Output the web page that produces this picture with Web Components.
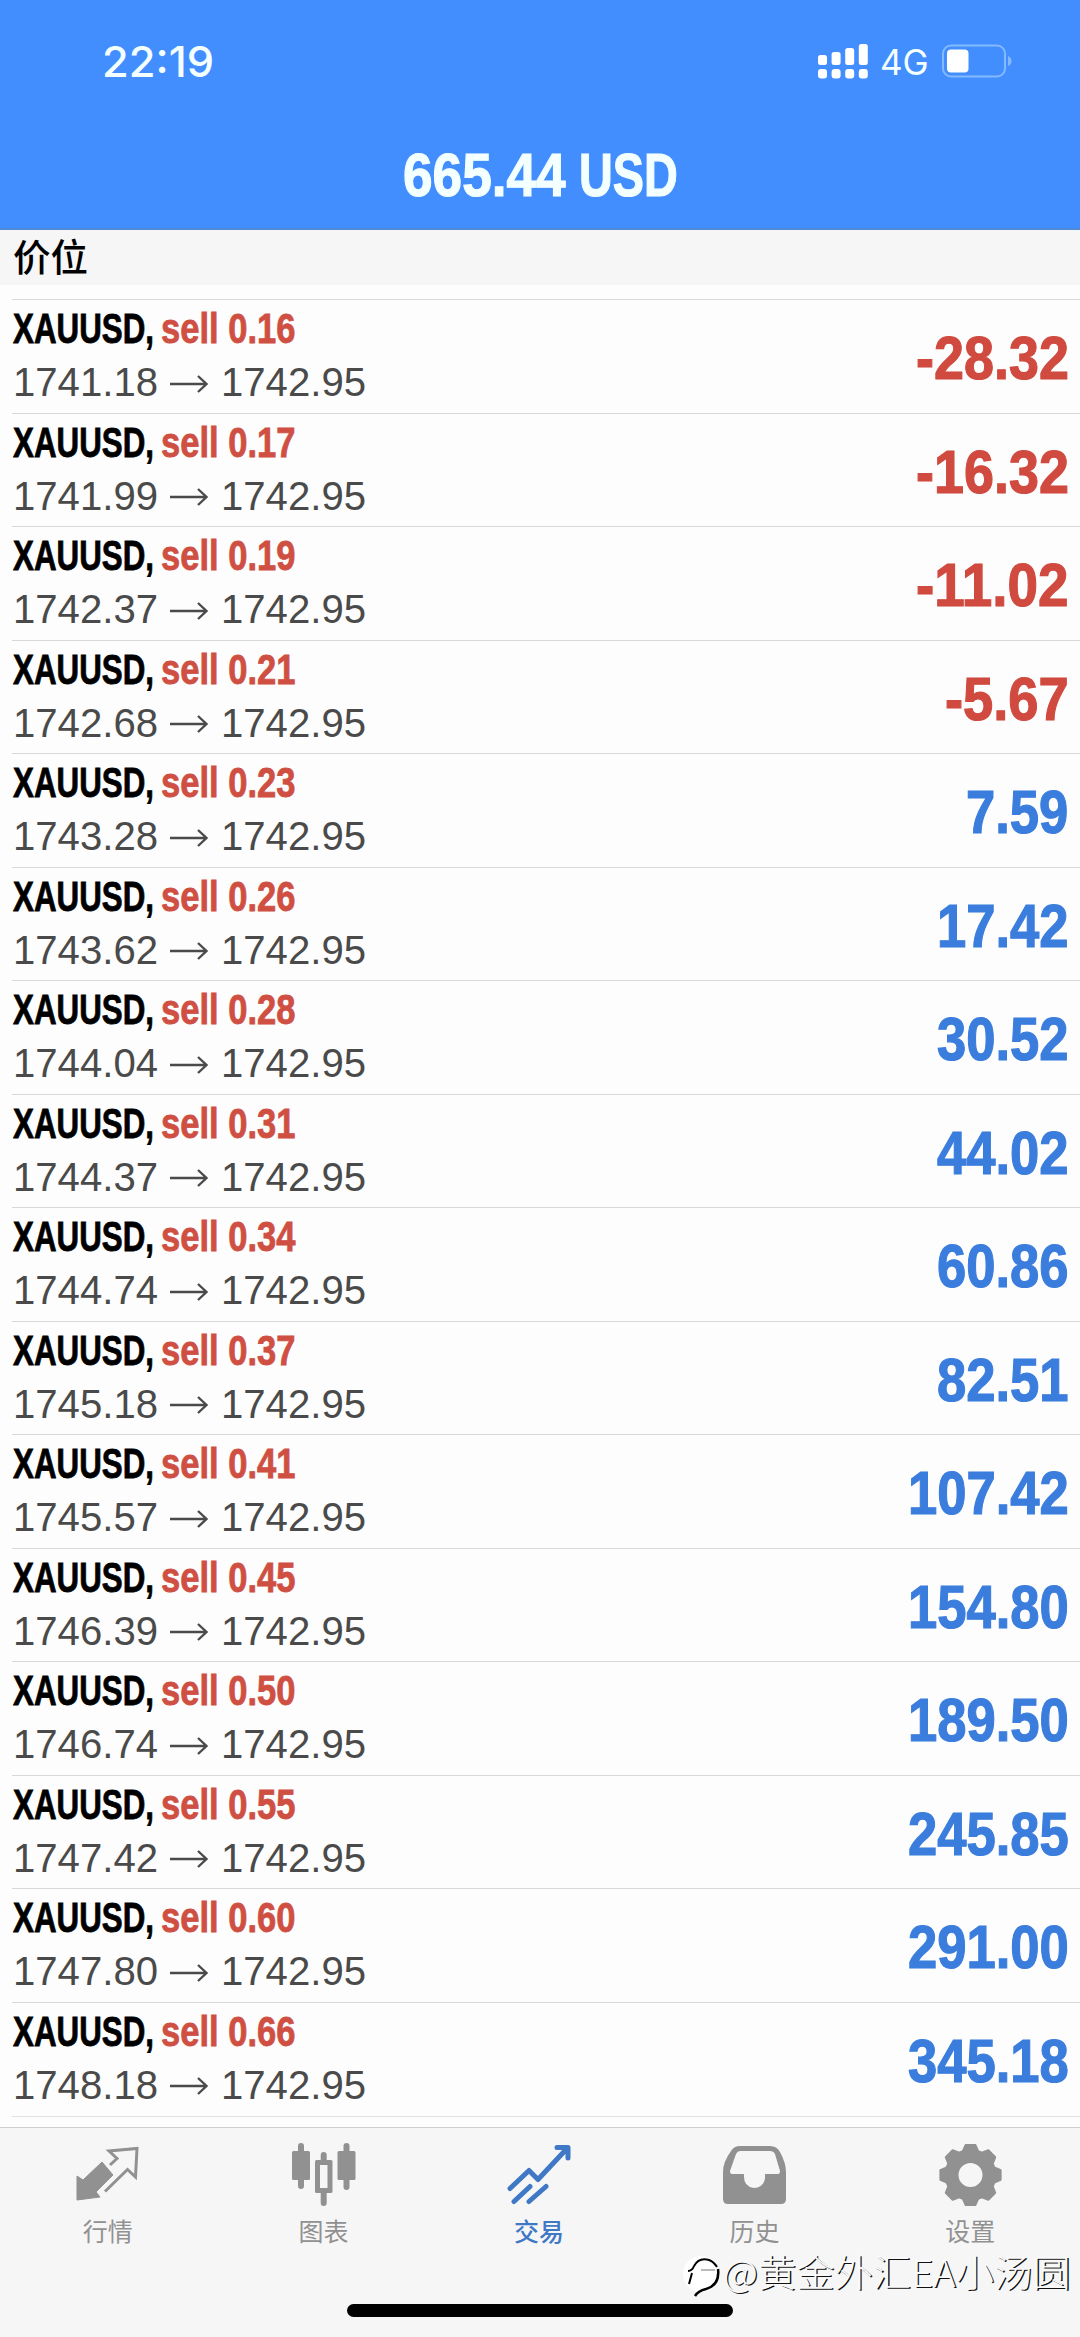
<!DOCTYPE html>
<html lang="zh">
<head>
<meta charset="utf-8">
<title>Trade</title>
<style>
html,body{margin:0;padding:0}
body{width:1080px;height:2337px;overflow:hidden;background:#fdfdfd;font-family:"Liberation Sans","Noto Sans CJK SC",sans-serif}
</style>
</head>
<body>
<trade-app></trade-app>
<script>
// Fits its slotted text to the width given in the "w" attribute by condensing it.
class FitText extends HTMLElement{
  constructor(){super();this.attachShadow({mode:'open'}).innerHTML=`<style>:host{display:flex}span{display:block;flex:none;transform-origin:0 50%;white-space:pre}</style><span><slot></slot></span>`}
  connectedCallback(){
    const w=+this.getAttribute('w'),s=this.shadowRoot.querySelector('span');
    this.style.width=w+'px';
    s.style.transform=`scaleX(${w/s.offsetWidth})`;
  }
}
class StatusBar extends HTMLElement{
  constructor(){super();this.attachShadow({mode:'open'}).innerHTML=`
<style>:host{display:flex;height:122px;align-items:center;color:#f4ffff;font-family:Inter,sans-serif;padding:0 68px 0 102px;box-sizing:border-box}
.t{font-size:43px;font-weight:500;line-height:50px;margin-right:auto}
.n{font-size:35px;line-height:44px;margin:2px 13px 0 12px}svg{display:block}</style>
<fit-text class="t" w="112">22:19</fit-text>
<svg width="50" height="36" viewBox="0 0 50 36" fill="#fff"><rect y="12" width="9" height="10" rx="2.5"/><rect x="13.6" y="9" width="9" height="13" rx="2.5"/><rect x="27.2" y="5" width="9" height="17" rx="2.5"/><rect x="40.8" y="1" width="9" height="21" rx="2.5"/><rect y="26" width="9" height="9.5" rx="3"/><rect x="13.6" y="26" width="9" height="9.5" rx="3"/><rect x="27.2" y="26" width="9" height="9.5" rx="3"/><rect x="40.8" y="26" width="9" height="9.5" rx="3"/></svg>
<fit-text class="n" w="49">4G</fit-text>
<svg width="70" height="34" viewBox="0 0 70 34"><rect x="1" y="1.5" width="62" height="31" rx="8" fill="none" stroke="#84b9ff" stroke-width="2"/><rect x="5" y="5.5" width="21.500" height="23" rx="4" fill="#fff"/><path d="M66 12q3.500 1.500 3.500 5t-3.500 5z" fill="#84b9ff"/></svg>`}
}
class AccountHeader extends HTMLElement{
  constructor(){super();this.attachShadow({mode:'open'}).innerHTML=`
<style>:host{display:block;height:230px;background:#438eff;box-shadow:inset 0 -2px #4f8ad8}
.b{display:flex;justify-content:center;gap:13px;color:#f4ffff;font-size:61px;font-weight:700;line-height:70px;padding-top:18px;-webkit-text-stroke:1.2px currentColor}</style>
<status-bar></status-bar><div class="b"><fit-text w="163"><slot></slot></fit-text><fit-text w="99"><slot name="currency"></slot></fit-text></div>`}
}
class SectionTitle extends HTMLElement{
  constructor(){super();this.attachShadow({mode:'open'}).innerHTML=`
<style>:host{display:block;height:55px;margin-bottom:14px;background:#f5f6f5;color:#000;font:500 37.500px/50px "Noto Sans CJK SC",sans-serif;padding-left:13px;box-sizing:border-box}</style><slot></slot>`}
}
class PositionRow extends HTMLElement{
  constructor(){super();this.attachShadow({mode:'open'})}
  connectedCallback(){
    const a=n=>this.getAttribute(n),p=a('profit'),neg=p[0]==='-';
    const w=(p.replace(/[.-]/g,'').length*29.3+14.7+(neg?21:0)).toFixed(1);
    this.shadowRoot.innerHTML=`
<style>:host{display:flex;height:113.54px;box-sizing:border-box;margin-left:12px;border-top:1.500px solid #d8d8d8;justify-content:space-between;align-items:flex-start}
.l{padding:5px 0 0 1px}.a,.p{display:flex;align-items:center}.a{font-size:42px;font-weight:700;line-height:48px;color:#000;-webkit-text-stroke:.8px currentColor}
.s{color:#cf4f43;margin-left:7px}.p{font-size:41.500px;line-height:48px;color:#4a4a4a;margin-top:5px}
svg{display:block;margin:3px 12px 0 11px}
.v{font-size:61px;font-weight:700;line-height:70px;margin:23px 11px 0 0;-webkit-text-stroke:1.2px currentColor;color:${neg?'#d04a3f':'#3a7ddd'}}</style>
<div class="l"><div class="a"><fit-text w="141">XAUUSD,</fit-text><fit-text class="s" w="134">sell ${a('lot')}</fit-text></div>
<div class="p"><fit-text w="145">${a('open')}</fit-text><svg width="40" height="18" viewBox="0 0 40 18" fill="none" stroke="#4a4a4a" stroke-width="2.400"><path d="M1 9H37M29 1L37.500 9L29 17"/></svg><fit-text w="145">1742.95</fit-text></div></div>
<fit-text class="v" w="${w}">${p}</fit-text>`}
}
const ICONS={
quotes:'<path d="M1 32V56L24 53L20 48L37 31L26 18L7 36Z" fill="currentColor" stroke="currentColor" stroke-linejoin="round"/><path d="M34 21L41 14.500L33 7L61 4.500L59.500 33L51.500 25.500L29 47.500" fill="none" stroke="currentColor" stroke-width="3"/>',
chart:'<g fill="currentColor"><rect x="6" y="-1" width="6" height="46" rx="3"/><rect y="7" width="18" height="29" rx="1.500"/><rect x="51.500" y="-1" width="6" height="47" rx="3"/><rect x="45.500" y="7" width="18" height="29" rx="1.500"/><rect x="28.700" y="8" width="6" height="54" rx="3"/><rect x="23" y="16" width="17.500" height="33" rx="1.500"/></g><rect x="28" y="21" width="7.500" height="23" fill="#f6f6f6"/>',
trade:'<g fill="none" stroke="currentColor" stroke-width="5" stroke-linecap="round" stroke-linejoin="round"><path d="M3 44.500L22 26.500L31 35.500L60 4.500M50 3.500H61V14M7 57.500L23 42.500M22 57.500L39 42.500"/></g>',
history:'<path fill="currentColor" fill-rule="evenodd" d="M17 2H47Q54 2 57 8Q63 19 63 28V55Q63 60 58 60H5Q0 60 0 55V28Q0 18 8 7Q11 2 17 2ZM17 7Q14.500 7 13 10L7 27Q7 30 9 30H21Q20 43 31 44Q43 43 42 30H55Q57 30 57 27L52 10Q50.500 7 47 7Z"/>',
settings:'<path fill="currentColor" fill-rule="evenodd" d="GEAR M44.500 31A13 13 0 1 0 18.500 31A13 13 0 1 0 44.500 31Z"/>'};
// Eight-lobed gear outline centred on (31.5, 31).
(()=>{let d='';for(let i=0;i<8;i++){const c=i*Math.PI/4-Math.PI/2;
  [[25,-.31],[30.500,-.16],[30.500,.16],[25,.31]].forEach(([r,o],k)=>{
    d+=(i||k?'L':'M')+(31.5+r*Math.cos(c+o)).toFixed(2)+' '+(31+r*Math.sin(c+o)).toFixed(2)})}
  ICONS.settings=ICONS.settings.replace('GEAR',d+'Z').replace('<path','<path stroke="currentColor" stroke-width="2" stroke-linejoin="round"')})();
class TabItem extends HTMLElement{
  constructor(){super();this.attachShadow({mode:'open'})}
  connectedCallback(){this.shadowRoot.innerHTML=`
<style>:host{display:flex;flex:1;flex-direction:column;align-items:center;color:#919191;font:400 25px/36px "Noto Sans CJK SC",sans-serif}
:host([active]){color:#3f78c4;font-weight:500}
svg{display:block;overflow:visible;margin:16px 0 6px}</style>
<svg width="63" height="62" viewBox="0 0 63 62">${ICONS[this.getAttribute('icon')]}</svg><slot></slot>`}
}
class TabBar extends HTMLElement{
  constructor(){super();this.attachShadow({mode:'open'}).innerHTML=`
<style>:host{display:flex;flex-direction:column;height:210px;background:#f6f6f6;border-top:1.500px solid #cfcfcf;box-sizing:border-box}
.r{display:flex;height:176px;flex:none;margin-right:2px}.h{width:386px;height:13px;border-radius:7px;background:#000;margin:0 auto}</style>
<div class="r"><slot></slot></div><div class="h"></div>`}
}
class WaterMark extends HTMLElement{
  constructor(){super();this.attachShadow({mode:'open'}).innerHTML=`
<style>:host{position:absolute;left:683px;top:2249px;display:flex;align-items:center;height:44px}
.t{font:300 37px/44px "Noto Sans CJK SC",sans-serif;color:#fafafa;text-shadow:1.300px 1.300px 0 #111}svg{display:block;margin-top:12px}</style>
<svg width="40" height="46" viewBox="0 0 40 46"><circle cx="18" cy="20" r="18" fill="#fff"/><g fill="none" stroke="#000" stroke-width="2"><path d="M11 12Q16 3 26 6Q31 8 34 13M5 17Q9 17 11 12M9 19L6 30"/><path d="M18 16H32" stroke-width="1" stroke="#777"/><path d="M35 15Q37 31 23 35Q15 37 12 42" stroke-width="2.500"/></g></svg>
<fit-text class="t" w="348">@黄金外汇EA小汤圆</fit-text>`}
}
class TradeApp extends HTMLElement{
  constructor(){super();
    const rows=[['0.16','1741.18','-28.32'],['0.17','1741.99','-16.32'],['0.19','1742.37','-11.02'],['0.21','1742.68','-5.67'],['0.23','1743.28','7.59'],['0.26','1743.62','17.42'],['0.28','1744.04','30.52'],['0.31','1744.37','44.02'],['0.34','1744.74','60.86'],['0.37','1745.18','82.51'],['0.41','1745.57','107.42'],['0.45','1746.39','154.80'],['0.50','1746.74','189.50'],['0.55','1747.42','245.85'],['0.60','1747.80','291.00'],['0.66','1748.18','345.18']];
    this.attachShadow({mode:'open'}).innerHTML=`
<style>:host{display:flex;flex-direction:column;width:1080px;height:2337px;position:relative}
.e{margin-left:12px;border-top:1.500px solid #e0e0e0}tab-bar{margin-top:auto}</style>
<account-header>665.44<span slot="currency">USD</span></account-header><section-title>价位</section-title>
<div>${rows.map(r=>`<position-row lot="${r[0]}" open="${r[1]}" profit="${r[2]}"></position-row>`).join('')}<div class="e"></div></div>
<tab-bar><tab-item icon="quotes">行情</tab-item><tab-item icon="chart">图表</tab-item><tab-item icon="trade" active>交易</tab-item><tab-item icon="history">历史</tab-item><tab-item icon="settings">设置</tab-item></tab-bar>
<water-mark></water-mark>`}
}
customElements.define('fit-text',FitText);
customElements.define('status-bar',StatusBar);
customElements.define('account-header',AccountHeader);
customElements.define('section-title',SectionTitle);
customElements.define('position-row',PositionRow);
customElements.define('tab-item',TabItem);
customElements.define('tab-bar',TabBar);
customElements.define('water-mark',WaterMark);
customElements.define('trade-app',TradeApp);
</script>
</body>
</html>
